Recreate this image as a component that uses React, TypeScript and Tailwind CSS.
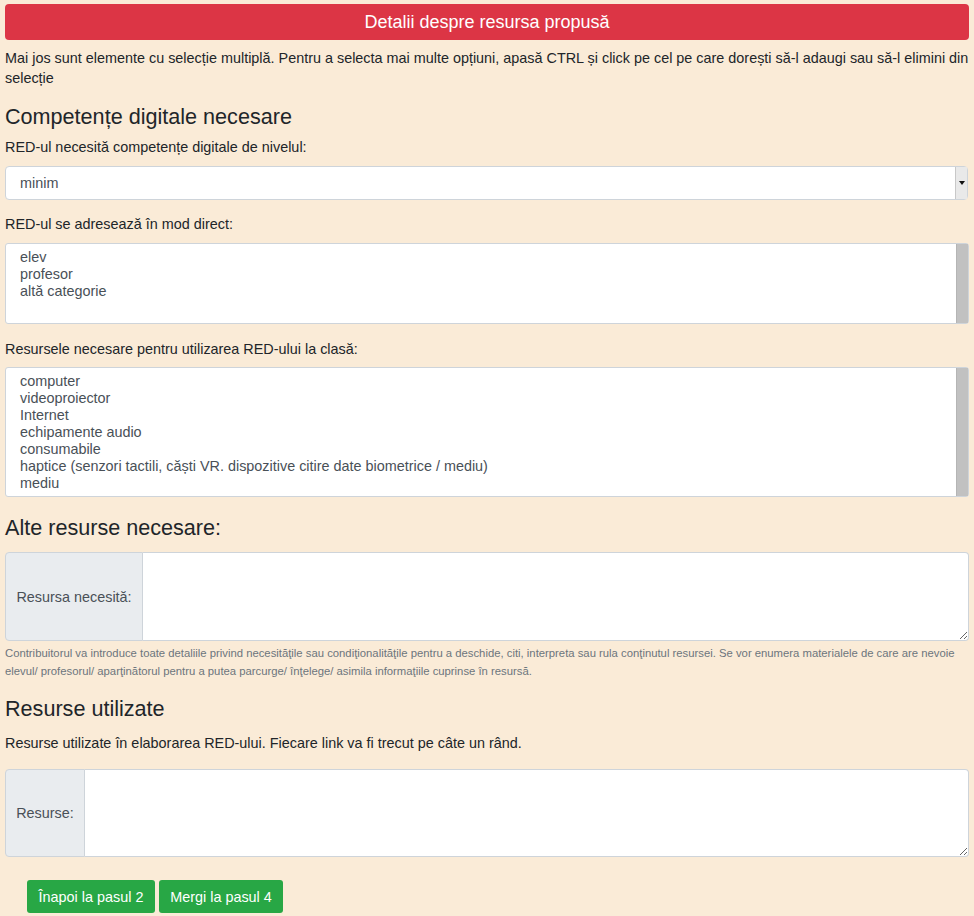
import React from "react";

const font = { fontFamily: '"Liberation Sans", Arial, sans-serif' };

function Scrollbar() {
  return <div className="absolute right-0 top-0 bottom-0 w-[12px] bg-[#c1c1c1] border-l border-[#b5b5b5]" />;
}

export default function App() {
  return (
    <div className="min-h-[916px] bg-[#faebd7] text-[#212529] text-[14.4px] leading-[20px] px-[5px] pt-[4px] pb-[3px]" style={font}>
      <div className="h-[36px] bg-[#dc3545] rounded-[4px] flex items-center justify-center text-white text-[18px]">
        Detalii despre resursa propusă
      </div>
      <p className="mt-[8px]">
        Mai jos sunt elemente cu selecție multiplă. Pentru a selecta mai multe opțiuni, apasă CTRL și click pe cel pe care dorești să-l adaugi sau să-l elimini din selecție
      </p>
      <h4 className="mt-[16px] text-[21.6px] leading-[26px]">Competențe digitale necesare</h4>
      <div className="mt-[7px]">RED-ul necesită competențe digitale de nivelul:</div>
      <div className="relative mt-[9px] h-[34px] bg-white border border-[#ced4da] rounded-[4px] flex items-center pl-[14px] text-[#495057] mr-[1px]">
        minim
        <div className="absolute right-0 top-0 bottom-0 w-[12px] bg-[#e9e9e9] border-l border-[#c8c8c8] flex items-center justify-center">
          <svg width="6" height="4" viewBox="0 0 6 4"><path d="M0 0h6L3 4z" fill="#111" /></svg>
        </div>
      </div>
      <div className="mt-[14px]">RED-ul se adresează în mod direct:</div>
      <div className="relative mt-[9px] h-[81px] bg-white border border-[#ced4da] rounded-[3px] pl-[14px] pt-[5px] text-[#495057] leading-[17px]">
        <div>elev</div>
        <div>profesor</div>
        <div>altă categorie</div>
        <Scrollbar />
      </div>
      <div className="mt-[15px]">Resursele necesare pentru utilizarea RED-ului la clasă:</div>
      <div className="relative mt-[8px] h-[130px] bg-white border border-[#ced4da] rounded-[3px] pl-[14px] pt-[5px] text-[#495057] leading-[17px]">
        <div>computer</div>
        <div>videoproiector</div>
        <div>Internet</div>
        <div>echipamente audio</div>
        <div>consumabile</div>
        <div>haptice (senzori tactili, căști VR. dispozitive citire date biometrice / mediu)</div>
        <div>mediu</div>
        <Scrollbar />
      </div>
      <h4 className="mt-[18px] text-[21.6px] leading-[26px]">Alte resurse necesare:</h4>
      <div className="mt-[11px] flex h-[89px]">
        <div className="w-[138px] shrink-0 bg-[#e9ecef] border border-[#ced4da] rounded-l-[4px] flex items-center justify-center text-[#495057]">
          Resursa necesită:
        </div>
        <textarea className="flex-1 bg-white border border-l-0 border-[#ced4da] rounded-r-[4px] outline-none resize-y" />
      </div>
      <div className="mt-[3px] text-[11.3px] leading-[18px] text-[#6c757d]">
        Contribuitorul va introduce toate detaliile privind necesităţile sau condiţionalităţile pentru a deschide, citi, interpreta sau rula conţinutul resursei. Se vor enumera materialele de care are nevoie elevul/ profesorul/ aparţinătorul pentru a putea parcurge/ înţelege/ asimila informaţiile cuprinse în resursă.
      </div>
      <h4 className="mt-[16px] text-[21.6px] leading-[26px]">Resurse utilizate</h4>
      <div className="mt-[11px]">Resurse utilizate în elaborarea RED-ului. Fiecare link va fi trecut pe câte un rând.</div>
      <div className="mt-[16px] flex h-[88px]">
        <div className="w-[80px] shrink-0 bg-[#e9ecef] border border-[#ced4da] rounded-l-[4px] flex items-center justify-center text-[#495057]">
          Resurse:
        </div>
        <textarea className="flex-1 bg-white border border-l-0 border-[#ced4da] rounded-r-[4px] outline-none resize-y" />
      </div>
      <div className="mt-[23px] ml-[22px] flex gap-[4px]">
        <button className="h-[33px] w-[128px] bg-[#28a745] text-white rounded-[3px] text-[14.4px]">Înapoi la pasul 2</button>
        <button className="h-[33px] w-[124px] bg-[#28a745] text-white rounded-[3px] text-[14.4px]">Mergi la pasul 4</button>
      </div>
    </div>
  );
}
